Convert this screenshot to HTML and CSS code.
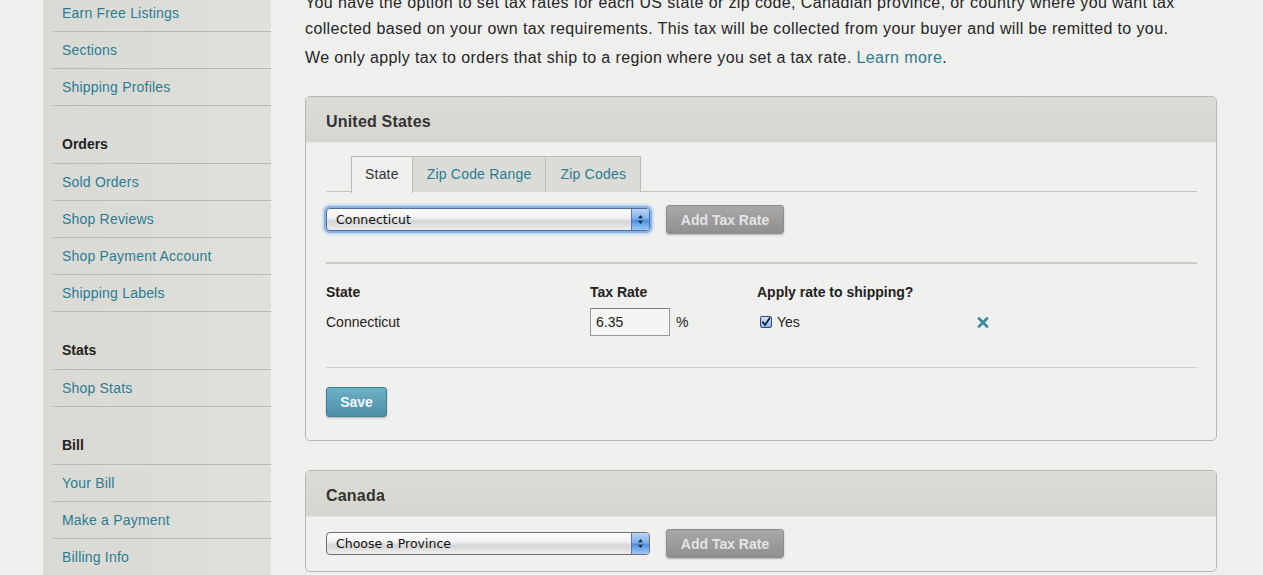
FILE: index.html
```html
<!DOCTYPE html>
<html lang="en">
<head>
<meta charset="utf-8">
<title>Tax Rates</title>
<link rel="stylesheet" href="styles.css">
</head>
<body>
<div class="page">
  <nav class="sidebar">
    <ul class="nav-list">
      <li class="nav-item"><a href="#">Earn Free Listings</a></li>
      <li class="nav-item"><a href="#">Sections</a></li>
      <li class="nav-item"><a href="#">Shipping Profiles</a></li>
      <li class="nav-head">Orders</li>
      <li class="nav-item"><a href="#">Sold Orders</a></li>
      <li class="nav-item"><a href="#">Shop Reviews</a></li>
      <li class="nav-item"><a href="#">Shop Payment Account</a></li>
      <li class="nav-item"><a href="#">Shipping Labels</a></li>
      <li class="nav-head">Stats</li>
      <li class="nav-item"><a href="#">Shop Stats</a></li>
      <li class="nav-head">Bill</li>
      <li class="nav-item"><a href="#">Your Bill</a></li>
      <li class="nav-item"><a href="#">Make a Payment</a></li>
      <li class="nav-item"><a href="#">Billing Info</a></li>
    </ul>
  </nav>

  <main class="main">
    <p class="intro">You have the option to set tax rates for each US state or zip code, Canadian province, or country where you want tax collected based on your own tax requirements. This tax will be collected from your buyer and will be remitted to you.</p>
    <p class="intro second">We only apply tax to orders that ship to a region where you set a tax rate. <a href="#">Learn more</a>.</p>

    <section class="panel">
      <header class="panel-head">United States</header>
      <div class="panel-body us-body">
        <div class="tabs">
          <span class="tab active">State</span>
          <a class="tab" href="#">Zip Code Range</a>
          <a class="tab" href="#">Zip Codes</a>
        </div>
        <div class="select-row">
          <div class="mac-select focused">
            <span class="mac-select-text">Connecticut</span>
            <span class="mac-select-arrow"><svg width="7" height="11" viewBox="0 0 7 11"><path d="M3.5 1 L6 4.2 H1 Z M3.5 10 L6 6.8 H1 Z" fill="#1b2a44"/></svg></span>
          </div>
          <button class="btn-gray" type="button">Add Tax Rate</button>
        </div>
        <div class="rule-thick"></div>
        <div class="rate-grid">
          <div class="th">State</div>
          <div class="th">Tax Rate</div>
          <div class="th">Apply rate to shipping?</div>
          <div></div>
          <div class="td">Connecticut</div>
          <div class="td"><span class="rate-input">6.35</span><span class="pct">%</span></div>
          <div class="td"><span class="checkbox"><svg width="10" height="10" viewBox="0 0 10 10"><path d="M1.8 5.2 L4 8 L8.6 1.2" fill="none" stroke="#10203c" stroke-width="1.8" stroke-linecap="round" stroke-linejoin="round"/></svg></span><span class="yes">Yes</span></div>
          <div class="td"><svg class="remove" width="12" height="11" viewBox="0 0 12 11"><path d="M2 1.5 L10 9.5 M10 1.5 L2 9.5" stroke="#3b88a2" stroke-width="2.6" stroke-linecap="round"/></svg></div>
        </div>
        <div class="rule-thin"></div>
        <button class="btn-blue" type="button">Save</button>
      </div>
    </section>

    <section class="panel canada">
      <header class="panel-head">Canada</header>
      <div class="panel-body ca-body">
        <div class="select-row">
          <div class="mac-select">
            <span class="mac-select-text">Choose a Province</span>
            <span class="mac-select-arrow"><svg width="7" height="11" viewBox="0 0 7 11"><path d="M3.5 1 L6 4.2 H1 Z M3.5 10 L6 6.8 H1 Z" fill="#1b2a44"/></svg></span>
          </div>
          <button class="btn-gray" type="button">Add Tax Rate</button>
        </div>
      </div>
    </section>
  </main>
</div>
</body>
</html>
```

FILE: styles.css
```css
* { box-sizing: border-box; }

html, body {
  margin: 0;
  padding: 0;
  height: 100%;
  overflow: hidden;
}

body {
  background: #efefee;
  font-family: "Liberation Sans", Arial, Helvetica, sans-serif;
  color: #222;
}

a { color: #2c7b93; text-decoration: none; }

.page {
  display: flex;
  align-items: flex-start;
  margin-top: -10px;
}

/* Sidebar */
.sidebar {
  margin-left: 43px;
  width: 228px;
  min-height: 620px;
  padding: 5px 0 0 9px;
  background: linear-gradient(90deg, #dadad5 0%, #ddddd8 60%, #e0e0dc 100%);
}

.nav-list {
  list-style: none;
  margin: 0;
  padding: 0;
}

.nav-item {
  height: 37px;
  line-height: 36px;
  padding-left: 10px;
  border-bottom: 1px solid #b9b9b5;
  font-size: 14px;
  letter-spacing: 0.2px;
}

.nav-head {
  height: 58px;
  padding: 29px 0 0 10px;
  line-height: 18px;
  font-size: 14px;
  font-weight: bold;
  color: #222;
  border-bottom: 1px solid #b9b9b5;
}

/* Main */
.main {
  margin-left: 34px;
  width: 912px;
}

.intro {
  margin: 0;
  font-size: 16px;
  line-height: 26px;
  letter-spacing: 0.38px;
  color: #262626;
}

.intro.second { margin-top: 3px; }

.panel {
  margin-top: 25px;
  border: 1px solid #b8b8b3;
  border-radius: 5px;
  background: #f0f0ee;
  overflow: hidden;
}

.panel.canada { margin-top: 29px; }

.panel-head {
  height: 46px;
  line-height: 46px;
  padding: 2px 20px 0;
  background: linear-gradient(180deg, #dcdcd6 0%, #d6d6cf 100%);
  border-bottom: 1px solid #e4e4e0;
  font-size: 16px;
  font-weight: bold;
  letter-spacing: 0.2px;
  color: #333;
}

.panel-body { padding: 0 19px 0 20px; }
.us-body { padding-top: 13px; padding-bottom: 23px; }
.ca-body { padding-top: 12px; padding-bottom: 13px; }
.ca-body .select-row { margin-top: 0; }

/* Tabs */
.tabs {
  display: flex;
  padding-left: 25px;
  border-bottom: 1px solid #c4c4bf;
  height: 36px;
}

.tab {
  height: 36px;
  line-height: 35px;
  padding: 0 14px;
  font-size: 14px;
  letter-spacing: 0.2px;
  border: 1px solid #bcbcb7;
  border-bottom: none;
  background: #dcdcd6;
  margin-left: -1px;
}

.tab:first-child { margin-left: 0; }

.tab.active {
  background: #f0f0ee;
  color: #333;
  height: 37px;
  padding: 0 13px;
  position: relative;
  z-index: 1;
}

/* Select row */
.select-row {
  display: flex;
  align-items: center;
  gap: 16px;
  margin-top: 13px;
  height: 29px;
}

.mac-select {
  width: 324px;
  height: 23px;
  border: 1px solid #6f6f6f;
  border-radius: 4px;
  background: linear-gradient(180deg, #ffffff 0%, #f2f2f2 40%, #d6d6d6 60%, #eeeeee 100%);
  display: flex;
  align-items: center;
  justify-content: space-between;
  overflow: hidden;
}

.mac-select.focused {
  box-shadow: 0 0 0 2px #86b2e4, 0 0 3px 3px #a9c8ee;
  border-color: #4e6f9c;
}

.mac-select-text {
  padding-left: 9px;
  font-family: "DejaVu Sans", "Liberation Sans", sans-serif;
  font-size: 12.5px;
  color: #111;
}

.mac-select-arrow {
  width: 18px;
  height: 100%;
  display: flex;
  align-items: center;
  justify-content: center;
  border-left: 1px solid #5a79a6;
  background: linear-gradient(180deg, #b9d6f6 0%, #7fb0ea 45%, #4f8fe0 55%, #9ccaf7 100%);
}

.btn-gray {
  width: 118px;
  height: 29px;
  border: 1px solid #8d8d8d;
  border-radius: 3px;
  background: linear-gradient(180deg, #a9a9a9 0%, #8f8f8f 100%);
  box-shadow: 0 1px 2px rgba(0,0,0,0.25);
  color: #e4e4e4;
  font-family: "Liberation Sans", Arial, sans-serif;
  font-size: 14px;
  font-weight: bold;
  padding: 0;
}

/* Table */
.rule-thick {
  margin-top: 28px;
  height: 2px;
  background: #cdcac2;
}

.rate-grid {
  display: grid;
  grid-template-columns: 264px 167px 226px 1fr;
  grid-template-rows: 18px 28px;
  row-gap: 7px;
  margin-top: 19px;
  font-size: 14px;
}

.th {
  font-weight: bold;
  line-height: 18px;
  color: #222;
}

.td {
  display: flex;
  align-items: center;
  color: #222;
}

.rate-input {
  width: 80px;
  height: 28px;
  line-height: 26px;
  padding-left: 5px;
  border: 1px solid #9b9b9b;
  border-top-color: #7d7d7d;
  background: #f5f5f3;
}

.pct { margin-left: 6px; }

.checkbox {
  width: 12px;
  height: 12px;
  margin-left: 3px;
  border: 1px solid #33486a;
  border-radius: 2px;
  background: linear-gradient(180deg, #d2e4f8 0%, #8ab8ec 100%);
  display: flex;
  align-items: center;
  justify-content: center;
}

.yes { margin-left: 5px; }

.remove { margin-left: -6px; }

.rule-thin {
  margin-top: 31px;
  height: 1px;
  background: #cfcfca;
}

.btn-blue {
  margin-top: 19px;
  width: 61px;
  height: 30px;
  border: 1px solid #3f7e94;
  border-radius: 3px;
  background: linear-gradient(180deg, #6eb0c6 0%, #4b8ea6 100%);
  box-shadow: 0 1px 2px rgba(0,0,0,0.25);
  color: #f4f8fa;
  font-family: "Liberation Sans", Arial, sans-serif;
  font-size: 14px;
  font-weight: bold;
  padding: 0;
  display: block;
}
```
